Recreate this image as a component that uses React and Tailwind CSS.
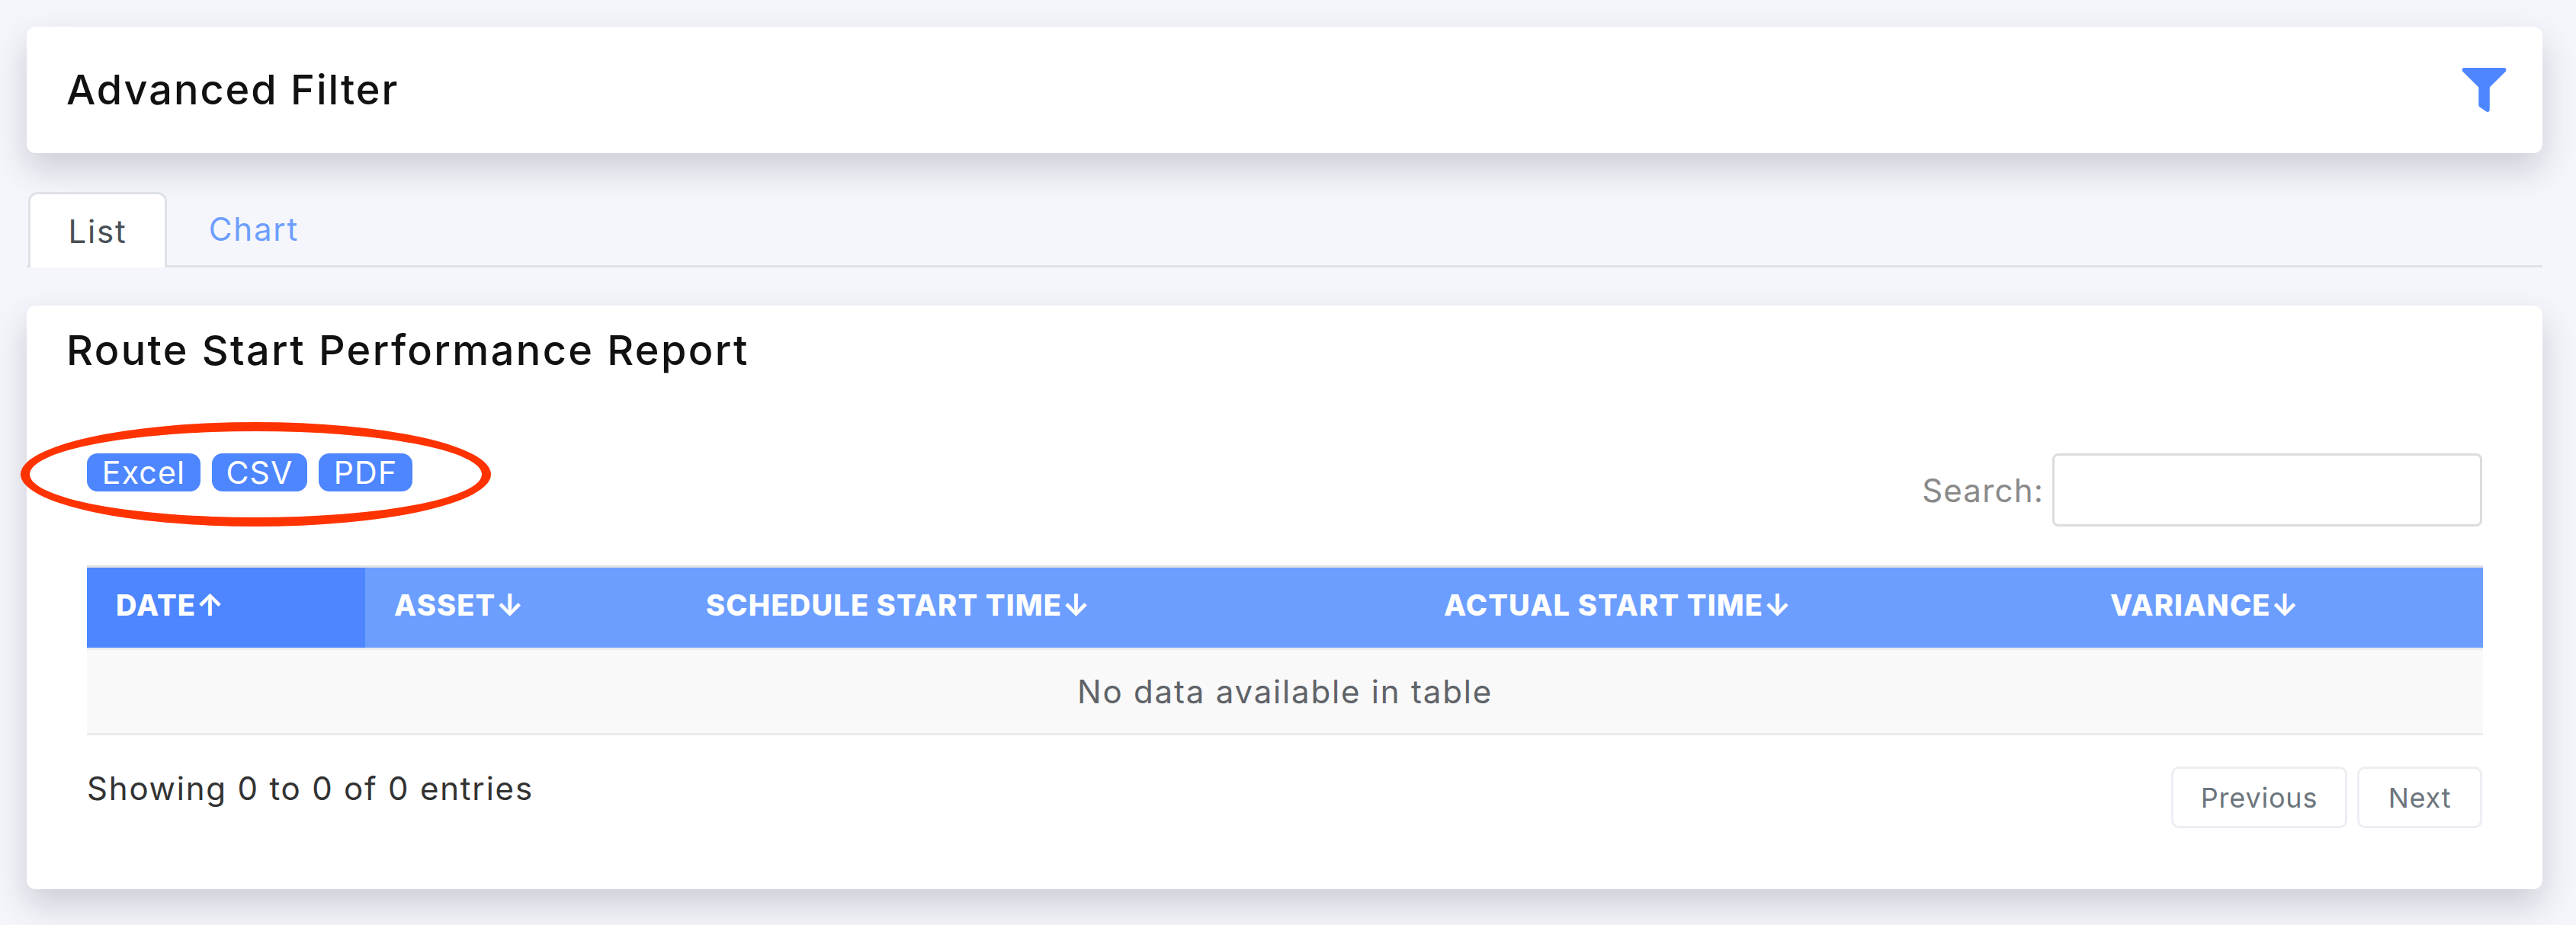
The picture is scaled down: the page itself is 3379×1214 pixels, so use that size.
import { FaFilter } from 'react-icons/fa'

const columns = [
  { label: 'DATE', arrow: '↑', width: 'w-[365px]', bg: 'bg-[#4d86ff]' },
  { label: 'ASSET', arrow: '↓', width: 'w-[409px]', bg: 'bg-[#6c9eff]' },
  { label: 'SCHEDULE START TIME', arrow: '↓', width: 'w-[968px]', bg: 'bg-[#6c9eff]' },
  { label: 'ACTUAL START TIME', arrow: '↓', width: 'w-[874px]', bg: 'bg-[#6c9eff]' },
  { label: 'VARIANCE', arrow: '↓', width: 'w-[527px]', bg: 'bg-[#6c9eff]' },
]

export default function App() {
  return (
    <div className="min-h-[1214px] bg-[#f5f6fb] pl-[35px] pr-[44px] pt-[35px] font-['Inter','Liberation_Sans',sans-serif] text-[42px] tracking-[1.8px]">
      {/* Advanced filter */}
      <div className="flex h-[166px] items-center justify-between rounded-[12px] bg-white pl-[52px] pr-[47px] shadow-[0_20px_45px_rgba(60,60,80,0.22)]">
        <h2 className="text-[54px] font-medium leading-none tracking-[2px] text-[#111]">Advanced Filter</h2>
        <FaFilter className="h-[58px] w-[59px] text-[#4d86ff]" />
      </div>

      {/* Tabs */}
      <div className="mt-[51px] flex h-[99px] border-b-[3px] border-[#dee2e6]">
        <div className="ml-[2px] flex h-[99px] w-[182px] items-center justify-center rounded-t-[12px] border-[3px] border-b-0 border-[#dee2e6] bg-white text-[#495057]">
          List
        </div>
        <div className="ml-[4px] flex h-[96px] w-[220px] items-center justify-center text-[#6c9eff]">
          Chart
        </div>
      </div>

      {/* Report */}
      <div className="relative mt-[50px] h-[766px] rounded-[12px] bg-white px-[52px] pt-[28px] shadow-[0_20px_45px_rgba(60,60,80,0.22)]">
        <h2 className="text-[54px] font-medium leading-[62px] tracking-[2.4px] text-[#111]">Route Start Performance Report</h2>

        <div className="px-[27px]">
          <div className="mt-[104px] flex items-start justify-between">
            <div className="flex gap-[15px] text-[41px] leading-[50px] tracking-[1.2px] text-white">
              <button className="h-[50px] w-[149px] rounded-[14px] bg-[#4d86ff]">Excel</button>
              <button className="h-[50px] w-[125px] rounded-[14px] bg-[#4d86ff]">CSV</button>
              <button className="h-[50px] w-[123px] rounded-[14px] bg-[#4d86ff]">PDF</button>
            </div>
            <label className="flex items-center gap-[11px] tracking-[1.2px] text-[#8a8a8a]">
              Search:
              <input className="h-[96px] w-[564px] rounded-[8px] border-[3px] border-[#dcdcdc] bg-white" />
            </label>
          </div>

          <table className="mt-[51px] w-full table-fixed border-collapse">
            <thead>
              <tr className="border-t-[3px] border-b-[3px] border-t-[#e2e2e2] border-b-[#e9ecef]">
                {columns.map((col) => (
                  <th
                    key={col.label}
                    className={`h-[108px] pb-[8px] pl-[38px] text-left text-[38px] font-extrabold leading-none tracking-[1.2px] text-white ${col.width} ${col.bg}`}
                  >
                    {col.label}
                    <span className="text-[40px] font-bold tracking-normal">{col.arrow}</span>
                  </th>
                ))}
              </tr>
            </thead>
            <tbody>
              <tr className="border-b-[3px] border-[#e9ecef] bg-[#f9f9f9]">
                <td colSpan={5} className="h-[112px] text-center text-[#5f6368]">
                  No data available in table
                </td>
              </tr>
            </tbody>
          </table>

          <div className="mt-[41px] flex items-start justify-between">
            <div className="pt-[4px] leading-[50px] text-[#333]">Showing 0 to 0 of 0 entries</div>
            <div className="flex gap-[13px] text-[36px] tracking-[0.8px] text-[#6c757d]">
              <button className="h-[81px] w-[231px] rounded-[10px] border-[3px] border-[#eceef3]">Previous</button>
              <button className="h-[81px] w-[164px] rounded-[10px] border-[3px] border-[#eceef3]">Next</button>
            </div>
          </div>
        </div>

        {/* Red marker ring round the export buttons */}
        <div className="absolute left-[-8px] top-[153px] h-[137px] w-[617px] rounded-[50%] border-[12px] border-[#ff3300]" />
      </div>
    </div>
  )
}
